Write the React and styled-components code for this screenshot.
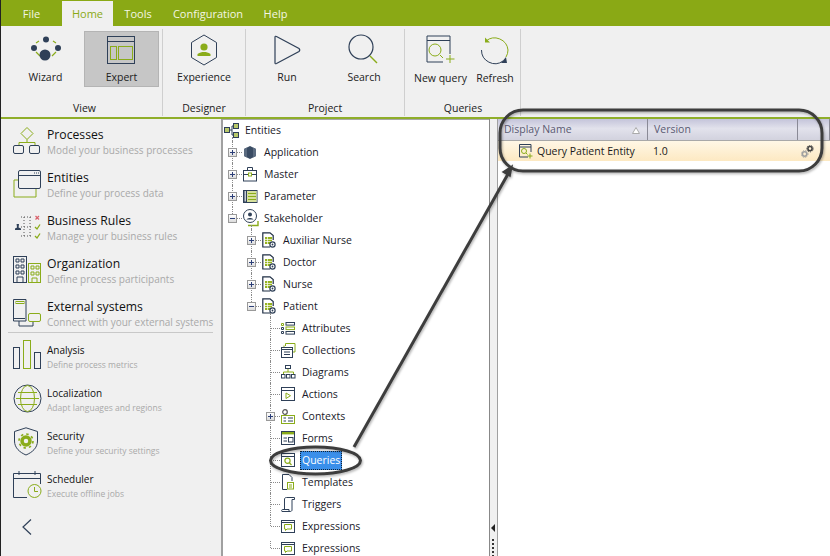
import React from 'react';
import styled, { createGlobalStyle } from 'styled-components';

const N = '#2f4058';
const G = '#8aac1a';

const Global = createGlobalStyle`
  html, body { margin: 0; padding: 0; background: #fff; }
  body { font-family: "Open Sans", "Noto Sans", "Liberation Sans", sans-serif; overflow: hidden; }
  svg { display: block; }
`;

const Page = styled.div`
  position: relative;
  width: 830px;
  height: 556px;
  display: flex;
  flex-direction: column;
  overflow: hidden;
  background: #f0f0f0;
  border-left: 1px solid #222;
  box-sizing: border-box;
`;

const MenuBar = styled.div`
  height: 26px;
  flex: none;
  background: #8aa915;
  display: flex;
  align-items: flex-end;
`;
const MenuTab = styled.div`
  height: 25px;
  width: ${p => p.$w}px;
  display: flex;
  align-items: center;
  justify-content: center;
  font-size: 11px;
  color: ${p => (p.$active ? '#8aa915' : '#f4f6e4')};
  background: ${p => (p.$active ? '#f0f0f0' : 'transparent')};
`;

const Ribbon = styled.div`
  height: 91px;
  flex: none;
  display: flex;
  background: #f0f0f0;
  border-bottom: 2px solid #8fae2a;
  box-sizing: content-box;
`;
const RibbonGroup = styled.div`
  width: ${p => p.$w}px;
  box-sizing: border-box;
  height: 87px;
  margin-top: 3px;
  padding-left: ${p => p.$pad || 0}px;
  border-right: 1px solid #cfcfcf;
  display: flex;
  flex-direction: column;
`;
const GroupButtons = styled.div`
  display: flex;
  height: 70px;
  padding-top: 2px;
`;
const GroupLabel = styled.div`
  text-align: center;
  font-size: 10.5px;
  line-height: 15px;
  color: #222;
`;
const RibbonButton = styled.div`
  width: ${p => p.$w}px;
  height: 56px;
  box-sizing: border-box;
  display: flex;
  flex-direction: column;
  align-items: center;
  font-size: 10.5px;
  color: #222;
  background: ${p => (p.$active ? '#c6c6c6' : 'transparent')};
  border: 1px solid ${p => (p.$active ? '#b4b4b4' : 'transparent')};
`;
const RibbonIcon = styled.div`
  height: 36px;
  display: flex;
  align-items: center;
  justify-content: center;
`;
const RibbonText = styled.div`
  margin-top: ${p => (p.$low ? 4 : 2)}px;
  line-height: 15px;
  white-space: nowrap;
`;

const Body = styled.div`
  flex: 1;
  display: flex;
  min-height: 0;
`;
const Sidebar = styled.div`
  width: 222px;
  flex: none;
  box-sizing: border-box;
  border-right: 2px solid #a0a0a0;
  display: flex;
  flex-direction: column;
`;
const SideItem = styled.div`
  height: 43px;
  flex: none;
  display: flex;
  align-items: flex-start;
  padding-left: 12px;
`;
const SideIcon = styled.div`
  width: 34px;
  height: 44px;
  flex: none;
  display: flex;
  justify-content: flex-start;
  align-items: center;
`;
const SideTexts = styled.div`
  display: flex;
  flex-direction: column;
  padding-top: ${p => (p.$small ? 10 : 7)}px;
  white-space: nowrap;
`;
const SideTitle = styled.div`
  font-size: ${p => (p.$small ? 10 : 12.2)}px;
  line-height: ${p => (p.$small ? 15 : 17)}px;
  color: #111;
`;
const SideSub = styled.div`
  font-size: ${p => (p.$small ? 8.5 : 10)}px;
  line-height: ${p => (p.$small ? 14 : 15)}px;
  color: #a9a9a9;
`;
const Divider = styled.div`
  height: 1px;
  background: #c8c8c8;
  margin: -2px 8px 0 7px;
  flex: none;
`;
const Collapse = styled.div`
  margin: 13px 0 0 20px;
`;

const Tree = styled.div`
  width: 267px;
  flex: none;
  background: #fff;
  box-sizing: border-box;
  border-right: 1px solid #888;
  box-shadow: inset 0 1px 0 #a8a8a8;
  overflow: hidden;
`;
const Row = styled.div`
  position: relative;
  height: 22px;
  display: flex;
  align-items: center;
  padding-left: ${p => p.$indent}px;
  font-size: 10.5px;
  color: #1a1a2a;
`;
const Guide = styled.div`
  position: absolute;
  left: ${p => p.$x}px;
  top: ${p => p.$top}px;
  bottom: ${p => p.$bottom}px;
  border-left: 1px dotted #8a8a8a;
`;
const Gutter = styled.div`
  position: relative;
  width: 15px;
  height: 100%;
  flex: none;
  &::before {
    content: '';
    position: absolute;
    left: 5px;
    right: 1px;
    top: 11px;
    border-top: 1px dotted #8a8a8a;
  }
`;
const Expander = styled.div`
  position: absolute;
  left: 0;
  top: 7px;
  width: 9px;
  height: 9px;
  box-sizing: border-box;
  border: 1px solid #999;
  background: linear-gradient(#ffffff, #dcdcdc);
  &::before {
    content: '';
    position: absolute;
    left: 1px;
    right: 1px;
    top: 3px;
    height: 1px;
    background: #2c3f78;
  }
  &::after {
    content: '';
    display: ${p => (p.$open ? 'none' : 'block')};
    position: absolute;
    top: 1px;
    bottom: 1px;
    left: 3px;
    width: 1px;
    background: #2c3f78;
  }
`;
const TreeIcon = styled.div`
  width: 20px;
  flex: none;
  display: flex;
  align-items: center;
`;
const TreeLabel = styled.div`
  white-space: nowrap;
  line-height: 17px;
  padding: 0 1px;
  margin-left: -1px;
  border: 1px dotted ${p => (p.$sel ? '#123' : 'transparent')};
  background: ${p => (p.$sel ? '#3a8fea' : 'transparent')};
  color: ${p => (p.$sel ? '#fff' : 'inherit')};
`;

const Splitter = styled.div`
  width: 7px;
  flex: none;
  background: #f0f0f0;
  position: relative;
  border-right: 1px solid #a0a0a0;
`;
const Grip = styled.div`
  position: absolute;
  left: 1px;
  top: 405px;
  width: 0;
  height: 0;
  border: 4px solid transparent;
  border-left-width: 0;
  border-right: 4px solid #222;
`;
const GripDots = styled.div`
  position: absolute;
  left: 2px;
  top: 420px;
  width: 2px;
  height: 30px;
  background: repeating-linear-gradient(#333 0 2px, transparent 2px 4px);
`;

const GridPane = styled.div`
  flex: 1;
  background: #fff;
  display: flex;
  flex-direction: column;
`;
const GridHead = styled.div`
  height: 22px;
  flex: none;
  box-sizing: border-box;
  display: flex;
  border-bottom: 1px solid #a8a8a8;
  background: linear-gradient(#c4c4da, #e2e2ec 45%, #d2d2de);
  font-size: 10.5px;
  color: #5a5a72;
`;
const HeadCell = styled.div`
  width: ${p => p.$w}px;
  flex: ${p => (p.$w ? 'none' : 1)};
  box-sizing: border-box;
  position: relative;
  display: flex;
  align-items: center;
  padding: 0 0 2px 6px;
  border-right: 1px solid #8a8a96;
`;
const SortMark = styled.div`
  position: absolute;
  right: 7px;
  top: 8px;
`;
const GridRow = styled.div`
  height: 20px;
  flex: none;
  display: flex;
  background: linear-gradient(#fff7e6, #fde9c2);
  font-size: 10.5px;
  color: #1a1a1a;
`;
const Cell = styled.div`
  width: ${p => p.$w}px;
  flex: ${p => (p.$w ? 'none' : 1)};
  box-sizing: border-box;
  display: flex;
  align-items: center;
  gap: 4px;
  padding-left: ${p => p.$pad}px;
`;

const Overlay = styled.svg`
  position: absolute;
  left: -1px;
  top: 0;
  pointer-events: none;
`;

const Wizard = () => (
  <svg width="32" height="28" viewBox="0 0 32 28" fill="none">
    <path d="M9 5 L6 7 M23 5 L26 7 M6 16 L10 20 M26 16 L22 20" stroke={G} strokeWidth="1.2" />
    <circle cx="16" cy="3.5" r="3" fill={N} /><circle cx="4" cy="12" r="3" fill={N} />
    <circle cx="28" cy="12" r="3" fill={N} /><circle cx="15" cy="19" r="5.5" fill={N} />
  </svg>
);
const Expert = () => (
  <svg width="29" height="29" viewBox="0 0 29 29" fill="none">
    <rect x=".5" y=".5" width="27" height="27" stroke={N} />
    <path d="M1 5.5H27" stroke={N} />
    <rect x="3.5" y="10.5" width="6" height="13" stroke={G} /><rect x="11.5" y="10.5" width="14" height="13" stroke={G} />
  </svg>
);
const Experience = () => (
  <svg width="28" height="32" viewBox="0 0 28 32" fill="none">
    <path d="M14 1 L26.5 8.5 V23.5 L14 31 L1.5 23.5 V8.5 Z" stroke={N} strokeLinejoin="round" />
    <circle cx="14" cy="13" r="3.6" fill={G} /><path d="M7.5 22 V20 C10 18.5 11.5 18 14 18 C16.5 18 18 18.5 20.5 20 V22 Z" fill={G} />
  </svg>
);
const Run = () => (
  <svg width="28" height="30" viewBox="0 0 28 30" fill="none">
    <path d="M2 2 Q2 .8 3.5 1.5 L26 13.5 Q27.5 15 26 16.5 L3.5 28.5 Q2 29.2 2 28 Z" stroke={N} strokeWidth="1.2" />
  </svg>
);
const Search = () => (
  <svg width="32" height="32" viewBox="0 0 32 32" fill="none">
    <circle cx="13" cy="13" r="12" stroke={N} strokeWidth="1.2" />
    <path d="M22 22 L29 29" stroke={G} strokeWidth="1.4" />
  </svg>
);
const NewQuery = () => (
  <svg width="30" height="30" viewBox="0 0 30 30" fill="none">
    <path d="M24 19 V1 H1 V27 H17" stroke={N} /><path d="M1 5.5H24" stroke={N} />
    <circle cx="9" cy="15" r="6" stroke={G} /><path d="M14 20 L17 23 M24 20 V28 M20 24 H28.5" stroke={G} />
  </svg>
);
const Refresh = () => (
  <svg width="30" height="30" viewBox="0 0 30 30" fill="none">
    <path d="M6 6 A13.5 13.5 0 0 1 28 15 A14 14 0 0 1 26 22" stroke={G} /><path d="M5 2.5 L5 7.5 L10 7.5" fill={G} />
    <path d="M1.5 15 A13.5 13.5 0 0 0 23 26" stroke={N} /><path d="M27 28 L21 28 L26 22 Z" fill={N} />
  </svg>
);

const SProcesses = () => (
  <svg width="28" height="28" viewBox="0 0 28 28" fill="none">
    <path d="M14 .5 L20 6.5 L14 12.5 L8 6.5 Z" stroke={G} /><path d="M14 12.5 V15.5 M6 19 V15.5 H22 V19" stroke={G} />
    <rect x=".5" y="18.5" width="10" height="8" rx="1.5" stroke={N} /><rect x="16.5" y="18.5" width="10" height="8" rx="1.5" stroke={N} />
  </svg>
);
const SEntities = () => (
  <svg width="28" height="28" viewBox="0 0 28 28" fill="none">
    <path d="M5 10 H1 V27 H23 V19" stroke={G} /><rect x="5.5" y=".5" width="22" height="18" rx="1.5" stroke={N} />
    <path d="M6 5.5H27" stroke={N} /><path d="M21 3h1M23 3h1M25 3h1" stroke={N} />
  </svg>
);
const SRules = () => (
  <svg width="28" height="24" viewBox="0 0 28 24" fill="none">
    <path d="M8 2H20M8 12H20M8 21H20M11 2V21M17 2V21" stroke="#555" strokeDasharray="1 2" />
    <path d="M2 15 V13.5 L4 12.5 L3.6 9 H6 L5.6 12.5 L8 13.5 V15 Z" fill={N} />
    <path d="M22.5 1 L26 4.5 M26 1 L22.5 4.5" stroke="#d9606a" strokeWidth="1.2" />
    <path d="M22 12 L24 14 L27 9.5 M22 21 L24 23 L27 18.5" stroke={G} strokeWidth="1.3" />
  </svg>
);
const SOrg = () => (
  <svg width="29" height="28" viewBox="0 0 29 28" fill="none">
    <rect x=".5" y=".5" width="13" height="26" stroke={N} /><path d="M3 3h3v3H3zM8 3h3v3H8zM3 9h3v3H3zM8 9h3v3H8zM3 15h3v3H3zM8 15h3v3H8zM4 27V21h6v6" stroke={N} />
    <rect x="15.5" y="7.5" width="12" height="19" stroke={G} /><path d="M18 10h3v3h-3zM23 10h3v3h-3zM18 16h3v3h-3zM23 16h3v3h-3zM19 27V22h5v5" stroke={G} />
  </svg>
);
const SExt = () => (
  <svg width="29" height="28" viewBox="0 0 29 28" fill="none">
    <path d="M.5 .5H13V22H.5Z" stroke={N} /><rect x="3" y="2.5" width="8" height="2" stroke={G} />
    <path d="M1 19.5H12M6 22V27H20V23" stroke={N} /><rect x="15.5" y="14.5" width="12" height="8" rx="1.5" stroke={G} />
  </svg>
);
const SAnalysis = () => (
  <svg width="29" height="30" viewBox="0 0 29 30" fill="none">
    <rect x=".5" y="7.5" width="6" height="21" stroke={N} /><rect x="10.5" y=".5" width="7" height="28" stroke={G} />
    <rect x="21.5" y="12.5" width="6" height="16" stroke={N} />
  </svg>
);
const SLocal = () => (
  <svg width="29" height="29" viewBox="0 0 29 29" fill="none">
    <circle cx="14.5" cy="14.5" r="13.5" stroke={N} /><path d="M3 14.5H26M5 8.5H24M5 20.5H24" stroke={G} />
    <ellipse cx="14.5" cy="14.5" rx="7" ry="13" stroke={G} />
  </svg>
);
const SSecurity = () => (
  <svg width="26" height="29" viewBox="0 0 26 29" fill="none">
    <path d="M13 .8 L24.5 4.5 V14 C24.5 21 19 25.5 13 28 C7 25.5 1.5 21 1.5 14 V4.5 Z" stroke={N} />
    <circle cx="13" cy="14" r="4" stroke={G} strokeWidth="3.5" /><circle cx="13" cy="14" r="7" stroke={G} strokeWidth="1.6" strokeDasharray="2.5 3" />
  </svg>
);
const SSched = () => (
  <svg width="29" height="29" viewBox="0 0 29 29" fill="none">
    <path d="M14 27.5H.5V3.5H27.5V14M1 8.5H27M6 1V5M22 1V5" stroke={N} />
    <circle cx="21.5" cy="21" r="6.5" stroke={G} /><path d="M21.5 17V21.5H25" stroke={G} />
  </svg>
);

const TEntities = () => (
  <svg width="16" height="15" viewBox="0 0 16 15" fill="none">
    <rect x=".5" y="4.5" width="5" height="5" fill="#b9c96a" stroke={N} /><rect x="9.5" y=".5" width="5" height="5" fill="#b9c96a" stroke={N} />
    <rect x="9.5" y="9.5" width="5" height="5" fill="#b9c96a" stroke={N} /><path d="M6 7H8V3H9M8 7V12H9" stroke={N} />
  </svg>
);
const THex = () => (
  <svg width="14" height="15" viewBox="0 0 14 15">
    <path d="M7 1 L13 4 V11 L7 14 L1 11 V4 Z" fill="#3a4c64" /><path d="M4 2.5 L1 4 V11 L4 12.5 Z" fill="#5b6b80" /><path d="M10 2.5 L13 4 V11 L10 12.5 Z" fill="#5b6b80" />
  </svg>
);
const TCase = () => (
  <svg width="15" height="15" viewBox="0 0 15 15" fill="none">
    <rect x=".5" y="3.5" width="13" height="10.5" stroke={N} /><path d="M4.5 3.5V.5H9.5V3.5M1 7.5H14" stroke={N} /><rect x="5.5" y="6" width="3" height="3" fill="#fff" stroke={G} />
  </svg>
);
const TParam = () => (
  <svg width="15" height="13" viewBox="0 0 15 13" fill="none">
    <rect x=".5" y=".5" width="13.5" height="12" stroke={N} /><rect x="4" y="1" width="9.5" height="11" fill="#d6e09c" /><path d="M1 1V12H3.5V1" fill="#c6ccd4" stroke={N} /><path d="M5 9.5H13M5 6.5H13M5 3.5H13" stroke={G} />
  </svg>
);
const TStake = () => (
  <svg width="16" height="18" viewBox="0 0 16 18" fill="none">
    <circle cx="7" cy="7" r="6.5" stroke={N} /><circle cx="7" cy="5.5" r="2" fill={N} /><path d="M3.5 10.5 C5 8.5 9 8.5 10.5 10.5Z" fill={N} />
    <path d="M5 16.5H15V12" stroke={G} strokeWidth="1.4" />
  </svg>
);
const TDoc = () => (
  <svg width="14" height="16" viewBox="0 0 14 16" fill="none">
    <path d="M8 15H.8V.8H8L11.2 3.5V8" stroke="#1f2e44" strokeWidth="1.2" /><rect x="3" y="5" width="7" height="7" fill="#96b31e" /><path d="M3 7.5H10M3 9.5H10M5.5 5V12" stroke="#fff" strokeWidth=".7" />
    <circle cx="10.5" cy="12.5" r="2.6" fill="#fff" stroke={N} strokeWidth="1.2" /><circle cx="10.5" cy="12.5" r=".9" fill={N} />
  </svg>
);
const TAttrs = () => (
  <svg width="14" height="13" viewBox="0 0 14 13" fill="none">
    <path d="M.5 1.5h2v2h-2z" stroke={G} /><path d="M.5 5.5h2v2h-2zM.5 9.5h2v2h-2z" stroke={N} /><rect x="5" y=".5" width="8.5" height="2.6" stroke={N} />
    <rect x="5" y="5" width="8.5" height="2.6" stroke={G} /><rect x="5" y="9.5" width="8.5" height="2.6" stroke={N} />
  </svg>
);
const TColl = () => (
  <svg width="15" height="15" viewBox="0 0 15 15" fill="none">
    <path d="M4.5 3V.5H14V9H12" stroke={G} /><path d="M3 5V2.5" stroke={G} /><rect x=".5" y="4.5" width="11" height="10" stroke={N} /><path d="M1 6.5H11M3 9H9M3 11.5H9" stroke={N} />
  </svg>
);
const TDiag = () => (
  <svg width="15" height="14" viewBox="0 0 15 14" fill="none">
    <rect x="4.5" y=".5" width="5" height="3" stroke={N} /><path d="M7 4V7M2.5 9V7H12.5V9" stroke={G} />
    <rect x=".5" y="9.5" width="3.5" height="3.5" stroke={N} /><rect x="5.5" y="9.5" width="3.5" height="3.5" stroke={N} /><rect x="10.5" y="9.5" width="3.5" height="3.5" stroke={N} />
  </svg>
);
const TActions = () => (
  <svg width="14" height="14" viewBox="0 0 14 14" fill="none">
    <rect x=".5" y=".5" width="13" height="13" stroke={N} /><path d="M1 3.5H13" stroke={N} /><path d="M5 6 L9.5 8.7 L5 11.5Z" stroke={G} />
  </svg>
);
const TContexts = () => (
  <svg width="14" height="15" viewBox="0 0 14 15" fill="none">
    <circle cx="4" cy="3" r="2.3" stroke="#555" strokeWidth="1.2" /><rect x=".5" y="6.5" width="13" height="8" stroke={G} /><path d="M2.5 9H5M7 9H12M2.5 12H5M7 12H12" stroke={N} />
  </svg>
);
const TForms = () => (
  <svg width="14" height="14" viewBox="0 0 14 14" fill="none">
    <rect x=".5" y=".5" width="13" height="13" stroke={N} /><rect x="1" y="1" width="12" height="2.4" fill={G} />
    <path d="M2.5 7H6M2.5 10H6" stroke={N} /><rect x="7.5" y="6.5" width="4.5" height="4.5" stroke={N} />
  </svg>
);
const TQueries = () => (
  <svg width="14" height="14" viewBox="0 0 14 14" fill="none">
    <rect x=".5" y=".5" width="13" height="13" stroke={N} /><path d="M1 3.5H13" stroke={N} />
    <circle cx="6.5" cy="7.8" r="2.6" stroke={G} strokeWidth="1.2" /><path d="M8.5 10 L10.5 12" stroke={G} strokeWidth="1.2" />
  </svg>
);
const TTemplates = () => (
  <svg width="13" height="16" viewBox="0 0 13 16" fill="none">
    <path d="M1.5 .5 V15.5 H6 M1.5 .5 H8 L11 3.5 V7" stroke={N} /><rect x="6.5" y="8.5" width="6" height="6.5" fill="#fff" stroke={G} /><path d="M8 11h3M8 13h3" stroke={G} />
  </svg>
);
const TTriggers = () => (
  <svg width="14" height="15" viewBox="0 0 14 15" fill="none">
    <path d="M3.5 13 V2 C3.5 1 4.5 .5 5.5 .5 H13.5 V2.5 H11 V13 C11 14 10 14.5 9 14.5 H1 C.5 14.5 .5 12.5 1.5 12.5 H8 V14" stroke={N} />
  </svg>
);
const TExpr = () => (
  <svg width="14" height="13" viewBox="0 0 14 13" fill="none">
    <rect x=".5" y=".5" width="13" height="12" stroke={N} /><path d="M1 2.5H13" stroke={N} /><path d="M3.5 4.5H10.5V9H6L4.5 10.5V9H3.5Z" stroke={G} />
  </svg>
);
const GQuery = () => (
  <svg width="14" height="15" viewBox="0 0 14 15" fill="none">
    <path d="M9 13H.5V.5H12V8" stroke={N} /><path d="M1 3H12" stroke={N} />
    <circle cx="5" cy="7" r="2.5" stroke={G} /><path d="M7 9 L8.5 10.5M11 9.5V14.5M8.5 12H13.5" stroke={G} />
  </svg>
);
const Gears = () => (
  <svg width="13" height="13" viewBox="0 0 13 13" fill="none">
    <circle cx="3.6" cy="9" r="2.2" stroke="#a0a0a0" strokeWidth="1.6" /><circle cx="3.6" cy="9" r="3.4" stroke="#a0a0a0" strokeDasharray="1 1" />
    <circle cx="9" cy="3.6" r="2.1" stroke="#444" strokeWidth="1.6" /><circle cx="9" cy="3.6" r="3.3" stroke="#444" strokeDasharray="1 1" />
  </svg>
);

const menu = [['File', 61], ['Home', 51, true], ['Tools', 50], ['Configuration', 90], ['Help', 45]];

const groups = [
  { label: 'View', w: 162, pad: 6, items: [[Wizard, 'Wizard', 77], [Expert, 'Expert', 75, true]] },
  { label: 'Designer', w: 83, items: [[Experience, 'Experience', 82]] },
  { label: 'Project', w: 159, items: [[Run, 'Run', 82], [Search, 'Search', 72]] },
  { label: 'Queries', w: 116, pad: 1, items: [[NewQuery, 'New query', 69, false, true], [Refresh, 'Refresh', 40, false, true]] },
];

const sideA = [
  [SProcesses, 'Processes', 'Model your business processes'],
  [SEntities, 'Entities', 'Define your process data'],
  [SRules, 'Business Rules', 'Manage your business rules'],
  [SOrg, 'Organization', 'Define process participants'],
  [SExt, 'External systems', 'Connect with your external systems'],
];
const sideB = [
  [SAnalysis, 'Analysis', 'Define process metrics'],
  [SLocal, 'Localization', 'Adapt languages and regions'],
  [SSecurity, 'Security', 'Define your security settings'],
  [SSched, 'Scheduler', 'Execute offline jobs'],
];

const full = x => [x, 0, 0];
const l1 = full(9);
const rows = [
  { d: 0, I: TEntities, t: 'Entities', g: [[9, 18, 0]] },
  { d: 1, I: THex, t: 'Application', x: '+', g: [l1] },
  { d: 1, I: TCase, t: 'Master', x: '+', g: [l1] },
  { d: 1, I: TParam, t: 'Parameter', x: '+', g: [l1] },
  { d: 1, I: TStake, t: 'Stakeholder', x: '-', g: [[9, 0, 11], [28, 18, 0]] },
  { d: 2, I: TDoc, t: 'Auxiliar Nurse', x: '+', g: [full(28)] },
  { d: 2, I: TDoc, t: 'Doctor', x: '+', g: [full(28)] },
  { d: 2, I: TDoc, t: 'Nurse', x: '+', g: [full(28)] },
  { d: 2, I: TDoc, t: 'Patient', x: '-', g: [[28, 0, 11], [47, 18, 0]] },
  { d: 3, I: TAttrs, t: 'Attributes', g: [full(47)] },
  { d: 3, I: TColl, t: 'Collections', g: [full(47)] },
  { d: 3, I: TDiag, t: 'Diagrams', g: [full(47)] },
  { d: 3, I: TActions, t: 'Actions', g: [full(47)] },
  { d: 3, I: TContexts, t: 'Contexts', x: '+', g: [full(47)] },
  { d: 3, I: TForms, t: 'Forms', g: [full(47)] },
  { d: 3, I: TQueries, t: 'Queries', sel: true, g: [full(47)] },
  { d: 3, I: TTemplates, t: 'Templates', g: [full(47)] },
  { d: 3, I: TTriggers, t: 'Triggers', g: [full(47)] },
  { d: 3, I: TExpr, t: 'Expressions', g: [[47, 0, 11]] },
  { d: 3, I: TExpr, t: 'Expressions', g: [[47, 4, 11]] },
];

const SideEntry = ({ I, title, sub, small }) => (
  <SideItem>
    <SideIcon><I /></SideIcon>
    <SideTexts $small={small}>
      <SideTitle $small={small}>{title}</SideTitle>
      <SideSub $small={small}>{sub}</SideSub>
    </SideTexts>
  </SideItem>
);

export default function App() {
  return (
    <Page>
      <Global />
      <MenuBar>
        {menu.map(([t, w, a]) => <MenuTab key={t} $w={w} $active={a}>{t}</MenuTab>)}
      </MenuBar>
      <Ribbon>
        {groups.map(g => (
          <RibbonGroup key={g.label} $w={g.w} $pad={g.pad}>
            <GroupButtons>
              {g.items.map(([I, t, w, active, low]) => (
                <RibbonButton key={t} $w={w} $active={active}>
                  <RibbonIcon><I /></RibbonIcon>
                  <RibbonText $low={low}>{t}</RibbonText>
                </RibbonButton>
              ))}
            </GroupButtons>
            <GroupLabel>{g.label}</GroupLabel>
          </RibbonGroup>
        ))}
      </Ribbon>
      <Body>
        <Sidebar>
          {sideA.map(([I, t, s]) => <SideEntry key={t} I={I} title={t} sub={s} />)}
          <Divider />
          {sideB.map(([I, t, s]) => <SideEntry key={t} I={I} title={t} sub={s} small />)}
          <Collapse>
            <svg width="12" height="18" viewBox="0 0 12 18" fill="none"><path d="M10 1.5 L2 9 L10 16.5" stroke={N} strokeWidth="1.2" /></svg>
          </Collapse>
        </Sidebar>
        <Tree>
          {rows.map((r, i) => (
            <Row key={i} $indent={r.d === 0 ? 1 : 5 + 19 * (r.d - 1)}>
              {r.g.map(([x, top, bottom]) => <Guide key={x} $x={x} $top={top} $bottom={bottom} />)}
              {r.d > 0 && (
                <Gutter>{r.x && <Expander $open={r.x === '-'} />}</Gutter>
              )}
              <TreeIcon><r.I /></TreeIcon>
              <TreeLabel $sel={r.sel}>{r.t}</TreeLabel>
            </Row>
          ))}
        </Tree>
        <Splitter><Grip /><GripDots /></Splitter>
        <GridPane>
          <GridHead>
            <HeadCell $w={150}>Display Name
              <SortMark>
                <svg width="8" height="7" viewBox="0 0 8 7" fill="none"><path d="M4 .5 L7.5 6.5 H.5 Z" fill="#fff" stroke="#aaa" /></svg>
              </SortMark>
            </HeadCell>
            <HeadCell $w={150}>Version</HeadCell>
            <HeadCell />
          </GridHead>
          <GridRow>
            <Cell $w={150} $pad={21}><GQuery />Query Patient Entity</Cell>
            <Cell $w={150} $pad={5}>1.0</Cell>
            <Cell $pad={3}><Gears /></Cell>
          </GridRow>
        </GridPane>
      </Body>
      <Overlay width="830" height="556" viewBox="0 0 830 556" fill="none">
        <defs>
          <filter id="soft" x="-5%" y="-5%" width="110%" height="110%">
            <feDropShadow dx="1" dy="1.5" stdDeviation="1.2" floodColor="#000" floodOpacity=".3" />
          </filter>
        </defs>
        <g stroke="#3d3d3d" strokeWidth="3" filter="url(#soft)">
          <rect x="500" y="110" width="322" height="61" rx="23" />
          <ellipse cx="315.5" cy="460.5" rx="45" ry="13.5" />
          <path d="M354 447 L508 174" />
          <path d="M512 166 L503 172 L510 176 Z" fill="#3d3d3d" strokeWidth="1.5" />
        </g>
      </Overlay>
    </Page>
  );
}
